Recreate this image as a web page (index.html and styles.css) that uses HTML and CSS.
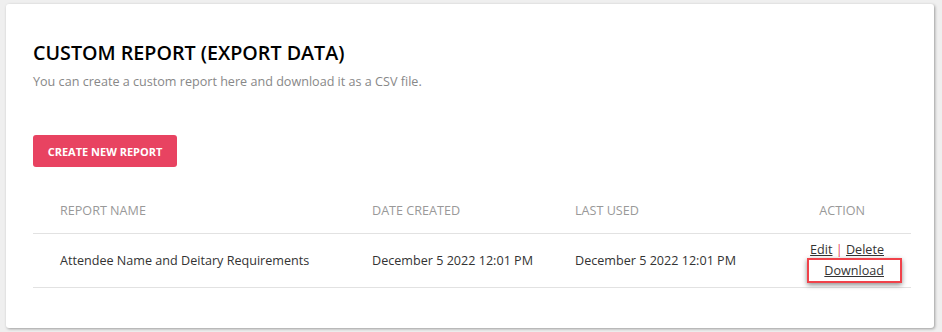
FILE: index.html
```html
<!DOCTYPE html>
<html>
<head>
<meta charset="utf-8">
<link rel="stylesheet" href="styles.css">
</head>
<body>
<div class="card">
  <h1 class="title">CUSTOM REPORT (EXPORT DATA)</h1>
  <p class="subtitle">You can create a custom report here and download it as a CSV file.</p>
  <button class="btn">CREATE NEW REPORT</button>
  <div class="table">
    <div class="row head">
      <div class="cell">REPORT NAME</div>
      <div class="cell">DATE CREATED</div>
      <div class="cell">LAST USED</div>
      <div class="cell action-head">ACTION</div>
    </div>
    <div class="row body">
      <div class="cell">Attendee Name and Deitary Requirements</div>
      <div class="cell">December 5 2022 12:01 PM</div>
      <div class="cell">December 5 2022 12:01 PM</div>
      <div class="cell actions">
        <div class="line"><a href="#">Edit</a> <span class="sep">|</span> <a href="#">Delete</a></div>
        <div class="line"><span class="highlight"><a href="#">Download</a></span></div>
      </div>
    </div>
  </div>
</div>
</body>
</html>
```

FILE: styles.css
```css
html, body {
  margin: 0;
  padding: 0;
}
body {
  background: #efefef;
  font-family: "Open Sans", "Liberation Sans", sans-serif;
  width: 942px;
  height: 332px;
  overflow: hidden;
}
.card {
  margin: 4px 0 0 6px;
  width: 928px;
  height: 324px;
  box-sizing: border-box;
  background: #fff;
  border-radius: 3px;
  box-shadow: 1px 1px 3px rgba(0,0,0,0.35);
  padding: 35px 23px 0 27px;
}
.title {
  margin: 0;
  font-size: 19.7px;
  font-weight: 600;
  line-height: 28px;
  color: #000;
}
.subtitle {
  margin: 6px 0 0;
  font-size: 12.6px;
  line-height: 18px;
  color: #888;
}
.btn {
  margin-top: 44px;
  display: block;
  width: 144px;
  height: 32px;
  border: none;
  border-radius: 3px;
  background: #e84361;
  color: #fff;
  font-family: inherit;
  font-size: 11px;
  font-weight: 700;
  letter-spacing: 0;
  padding: 0;
}
.table {
  margin-top: 20px;
}
.row {
  display: grid;
  grid-template-columns: 312px 203px 1fr 160px;
  align-items: center;
  border-bottom: 1px solid #e2e2e2;
}
.row.head {
  height: 46px;
}
.row.body {
  height: 53px;
}
.cell {
  padding-left: 27px;
  font-size: 12.6px;
  color: #333;
}
.head .cell {
  color: #999;
}
.action-head {
  text-align: right;
  padding-right: 46px;
}
.actions {
  text-align: right;
  padding-right: 27px;
  padding-bottom: 2px;
}
.actions .line {
  line-height: 21px;
}
.actions a {
  color: #333;
  text-decoration: underline;
}
.sep {
  color: #e84361;
}
.highlight {
  position: relative;
  display: inline-block;
}
.highlight::after {
  content: "";
  position: absolute;
  left: -17px;
  right: -18px;
  top: -2px;
  bottom: -2px;
  border: 2px solid #f0424a;
  box-shadow: 0 2px 5px rgba(0,0,0,0.45);
}
```
